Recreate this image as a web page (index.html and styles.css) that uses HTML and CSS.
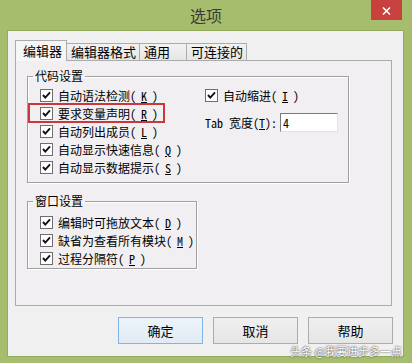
FILE: index.html
```html
<!DOCTYPE html>
<html lang="zh-CN">
<head>
  <meta charset="UTF-8">
  <meta name="viewport" content="width=device-width, initial-scale=1.0">
  <title>选项</title>
  <link rel="stylesheet" href="styles.css">
</head>
<body>

  <div class="window">
    <div class="titlebar">
      <span class="title">选项</span>
      <button class="close-btn" type="button">
        <svg width="31" height="20" viewBox="0 0 31 20">
          <path d="M12 7.5 L19 14.5 M19 7.5 L12 14.5" stroke="#fff" stroke-width="1.6" fill="none"/>
        </svg>
      </button>
    </div>

    <div class="client">
      <div class="tabs">
        <div class="tab active">编辑器</div>
        <div class="tab">编辑器格式</div>
        <div class="tab wide">通用</div>
        <div class="tab">可连接的</div>
      </div>

      <div class="panel">
        <!-- 代码设置 -->
        <fieldset class="group code-group">
          <legend>代码设置</legend>
          <div class="code-cols">
            <div class="col">
              <div class="check-row"><span class="box"></span>自动语法检测(<u>K</u>)</div>
              <div class="check-row marked"><span class="box"></span>要求变量声明(<u>R</u>)</div>
              <div class="check-row"><span class="box"></span>自动列出成员(<u>L</u>)</div>
              <div class="check-row"><span class="box"></span>自动显示快速信息(<u>Q</u>)</div>
              <div class="check-row"><span class="box"></span>自动显示数据提示(<u>S</u>)</div>
            </div>
            <div class="col">
              <div class="check-row"><span class="box"></span>自动缩进(<u>I</u>)</div>
              <div class="tab-row">
                <label for="tab-width">Tab 宽度(<u>T</u>):</label>
                <input type="text" id="tab-width" value="4">
              </div>
            </div>
          </div>
        </fieldset>

        <!-- 窗口设置 -->
        <fieldset class="group window-group">
          <legend>窗口设置</legend>
          <div class="check-row"><span class="box"></span>编辑时可拖放文本(<u>D</u>)</div>
          <div class="check-row"><span class="box"></span>缺省为查看所有模块(<u>M</u>)</div>
          <div class="check-row"><span class="box"></span>过程分隔符(<u>P</u>)</div>
        </fieldset>
      </div>

      <div class="buttons">
        <button class="btn default" type="button">确定</button>
        <button class="btn" type="button">取消</button>
        <button class="btn" type="button">帮助</button>
      </div>
    </div>

    <div class="watermark">头条 @我要进步多一点</div>
  </div>

</body>
</html>
```

FILE: styles.css
```css
/* Windows style options dialog */
html, body {
  margin: 0;
  background-color: #a5bd6c;
}
body {
  font-family: "Noto Sans CJK SC", sans-serif;
  color: #000;
}
.window {
  position: relative;
  width: 412px;
  height: 363px;
  overflow: hidden;
}

/* title bar */
.titlebar {
  height: 31px;
  display: grid;
  grid-template-columns: 1fr auto 1fr;
}
.title {
  grid-column: 2;
  font-size: 16px;
  line-height: 31px;
  color: #3a3a3a;
}
.close-btn {
  grid-column: 3;
  justify-self: end;
  align-self: start;
  width: 31px;
  height: 20px;
  margin-right: 10px;
  padding: 0;
  border: none;
  background-color: #c9413f;
  display: block;
}
.close-btn svg {
  display: block;
}

/* client area */
.client {
  width: 395px;
  height: 325px;
  margin-left: 8px;
  padding: 9px 0 0 7px;
  box-sizing: border-box;
  background-color: #f0f0f0;
  box-shadow: 0 0 0 1px #93ab5c;
}

/* tabs */
.tabs {
  display: flex;
  align-items: flex-end;
  height: 20px;
}
.tab {
  height: 17px;
  padding: 0 3px 0 4px;
  box-sizing: border-box;
  font-size: 13px;
  line-height: 16px;
  border: 1px solid #acacac;
  border-bottom: none;
  border-left: none;
  background: linear-gradient(#f2f2f2, #e6e6e6);
  white-space: nowrap;
}
.tab.wide {
  min-width: 47px;
}
.tab.active {
  position: relative;
  z-index: 1;
  height: 21px;
  width: 52px;
  margin-bottom: -1px;
  padding: 0 4px 0 7px;
  line-height: 20px;
  border-left: 1px solid #acacac;
  background: #f7f6f7;
}

/* tab page */
.panel {
  width: 377px;
  height: 246px;
  padding: 8px 0 0 11px;
  box-sizing: border-box;
  background-color: #f1eff1;
  border: 1px solid #acacac;
}

/* group boxes */
.group {
  margin: 0;
  padding: 0;
  min-width: 0;
  box-sizing: border-box;
  border: 1px solid #a0a0a0;
  box-shadow: 1px 1px 0 #fff, inset 1px 1px 0 #fff;
}
.group legend {
  margin-left: -7px;
  padding: 0 2px;
  font-size: 12px;
  line-height: 14px;
}
.code-group {
  width: 322px;
  height: 114px;
  padding: 3px 0 0 12px;
}
.code-cols {
  display: grid;
  grid-template-columns: 165px 1fr;
}
.window-group {
  width: 170px;
  height: 75px;
  margin-top: 11px;
  padding: 5px 0 0 12px;
}

/* check boxes */
.check-row {
  position: relative;
  display: flex;
  align-items: center;
  gap: 5px;
  height: 18px;
  font-family: "Noto Sans Mono CJK SC", "Noto Sans CJK SC", monospace;
  font-size: 12px;
  white-space: nowrap;
}
.box {
  width: 13px;
  height: 13px;
  box-sizing: border-box;
  border: 1px solid #6e6e6e;
  background: #fff url("data:image/svg+xml;utf8,<svg xmlns='http://www.w3.org/2000/svg' width='11' height='11'><path d='M2 5 L4.3 7.6 L9 2.4' stroke='%23111' stroke-width='1.9' fill='none'/></svg>") center no-repeat;
  flex-shrink: 0;
}
.check-row.marked::after {
  content: "";
  position: absolute;
  left: -12px;
  right: 40px;
  top: -1px;
  bottom: -1px;
  border: 2px solid #c8383c;
}

.tab-row {
  display: flex;
  align-items: center;
  gap: 3px;
  margin-top: 9px;
  font-family: "Noto Sans Mono CJK SC", "Noto Sans CJK SC", monospace;
  font-size: 12px;
}
.tab-row input {
  width: 58px;
  height: 19px;
  box-sizing: border-box;
  padding: 0 2px;
  font-family: inherit;
  font-size: 12px;
  border: 1px solid;
  border-color: #7a7a7a #e3e3e3 #e3e3e3 #7a7a7a;
  background: #fff;
  outline: none;
}

/* dialog buttons */
.buttons {
  display: flex;
  justify-content: flex-end;
  gap: 10px;
  width: 378px;
  margin-top: 11px;
}
.btn {
  width: 85px;
  height: 27px;
  padding: 0;
  font-family: "Noto Sans CJK SC", sans-serif;
  font-size: 13px;
  color: #000;
  border: 1px solid #acacac;
  background: linear-gradient(#f0f0f0, #e5e5e5);
}
.btn.default {
  border-color: #7eb4ea;
  background: linear-gradient(#ecf3fa, #e2ebf5);
}

.watermark {
  position: absolute;
  right: 10px;
  bottom: 5px;
  font-size: 11px;
  line-height: 14px;
  color: #fff;
  text-shadow: 0 0 2px #555, 0 0 1px #555;
}
```
